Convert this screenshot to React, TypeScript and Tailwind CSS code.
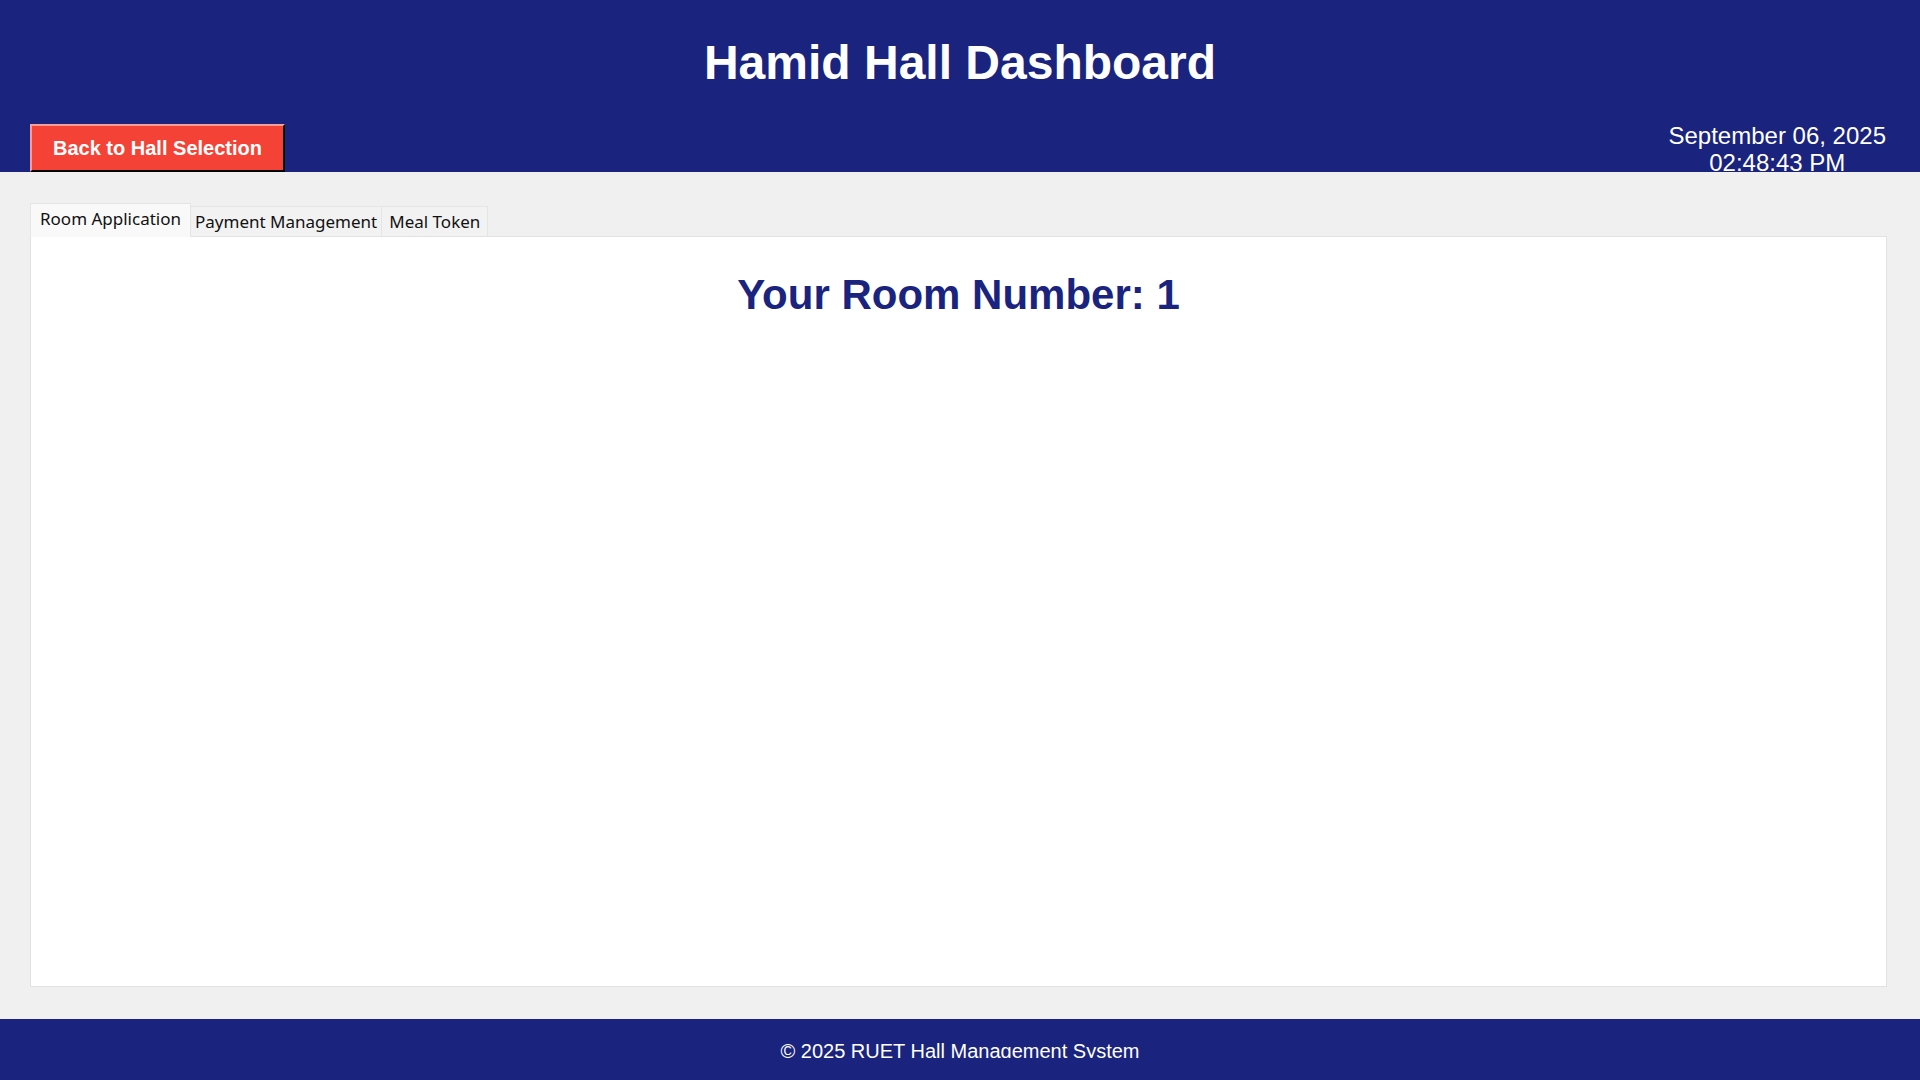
const tabs = [
  { label: 'Room Application', padding: 'px-[9px]' },
  { label: 'Payment Management', padding: 'px-1' },
  { label: 'Meal Token', padding: 'px-[7px]' },
];

function Header() {
  return (
    <header className="bg-[#1a237e] text-white">
      <h1 className="pt-[33px] text-center text-[48px] leading-[60px] font-bold">Hamid Hall Dashboard</h1>
      <div className="flex items-end justify-between pt-[29px] pr-[34px] pl-[30px]">
        <button
          type="button"
          className="h-12 border-2 border-t-[#ff9e97] border-r-black border-b-black border-l-[#ff9e97] bg-[#f44336] px-[21px] text-[20px] leading-6 font-bold text-white"
        >
          Back to Hall Selection
        </button>
        <time dateTime="2025-09-06T14:48:43" className="-mb-1 text-center text-[24px] leading-[27px]">
          September 06, 2025
          <br />
          02:48:43 PM
        </time>
      </div>
    </header>
  );
}

function TabBar() {
  return (
    <div role="tablist" className="flex items-end font-['Noto_Sans','Open_Sans',sans-serif] text-[17px] leading-6 text-[#111]">
      {tabs.map(({ label, padding }, i) => (
        <button
          key={label}
          type="button"
          role="tab"
          aria-selected={i === 0}
          className={`${padding} border border-b-0 border-[#e5e5e5] ${
            i === 0 ? 'relative -mb-px h-[34px] bg-[#f9f9f9] pb-1' : 'h-[30px] border-l-0 bg-[#f2f2f2]'
          }`}
        >
          {label}
        </button>
      ))}
    </div>
  );
}

export default function App() {
  return (
    <div className="flex min-h-screen flex-col bg-[#f0f0f0] font-['Liberation_Sans',Arial,sans-serif]">
      <Header />
      <main className="flex flex-1 flex-col pt-[31px] pr-[33px] pb-8 pl-[30px]">
        <TabBar />
        <section role="tabpanel" className="flex-1 border border-[#e2e2e2] bg-white pt-8">
          <h2 className="text-center text-[42px] leading-[52px] font-bold text-[#1a237e]">Your Room Number: 1</h2>
        </section>
      </main>
      <footer className="bg-[#1a237e] pt-5 pb-[22px] text-center text-[20px] text-white">
        <p className="h-[19px] overflow-hidden leading-6">© 2025 RUET Hall Management System</p>
      </footer>
    </div>
  );
}
